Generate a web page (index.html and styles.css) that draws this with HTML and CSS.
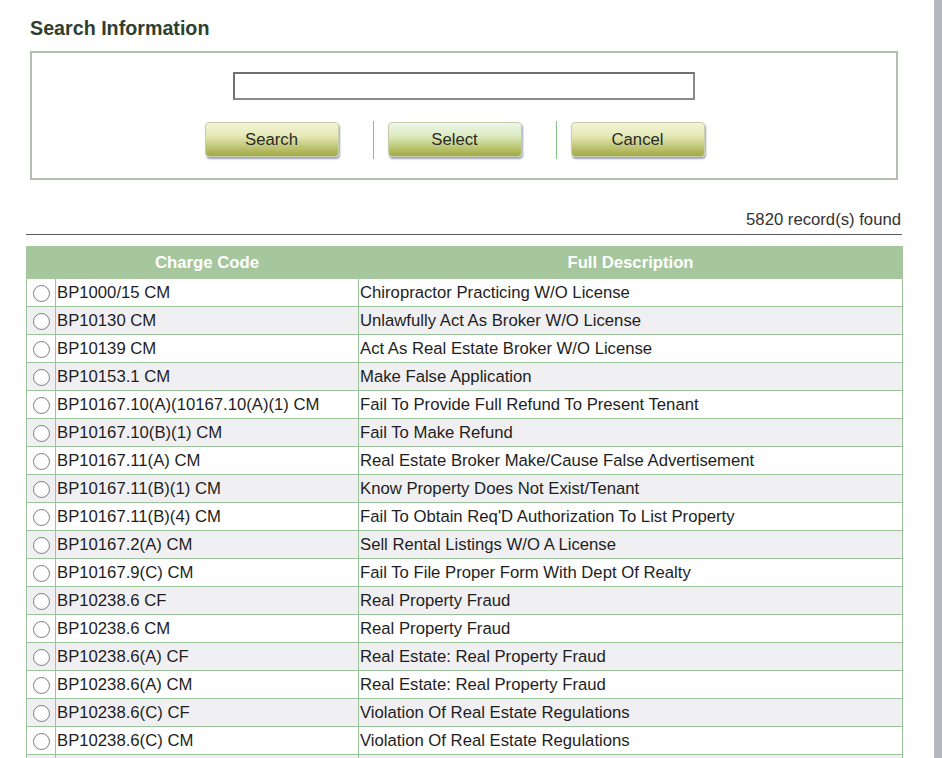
FILE: index.html
```html
<!DOCTYPE html>
<html lang="en">
<head>
<meta charset="utf-8">
<title>Search Information</title>
<link rel="stylesheet" href="styles.css">
</head>
<body>
<div class="page">
  <main class="content">
    <h1 class="title">Search Information</h1>
    <section class="search-box">
      <input class="search-input" type="text">
      <div class="actions">
        <button class="btn" type="button">Search</button>
        <span class="sep"></span>
        <button class="btn btn-hover" type="button">Select</button>
        <span class="sep"></span>
        <button class="btn" type="button">Cancel</button>
      </div>
    </section>
    <section class="results">
      <div class="count">5820 record(s) found</div>
      <table class="grid">
        <colgroup>
          <col class="c-radio">
          <col class="c-code">
          <col class="c-desc">
        </colgroup>
        <thead>
          <tr><th></th><th>Charge Code</th><th>Full Description</th></tr>
        </thead>
        <tbody>
          <tr><td><span class="radio"></span></td><td>BP1000/15 CM</td><td>Chiropractor Practicing W/O License</td></tr>
          <tr><td><span class="radio"></span></td><td>BP10130 CM</td><td>Unlawfully Act As Broker W/O License</td></tr>
          <tr><td><span class="radio"></span></td><td>BP10139 CM</td><td>Act As Real Estate Broker W/O License</td></tr>
          <tr><td><span class="radio"></span></td><td>BP10153.1 CM</td><td>Make False Application</td></tr>
          <tr><td><span class="radio"></span></td><td>BP10167.10(A)(10167.10(A)(1) CM</td><td>Fail To Provide Full Refund To Present Tenant</td></tr>
          <tr><td><span class="radio"></span></td><td>BP10167.10(B)(1) CM</td><td>Fail To Make Refund</td></tr>
          <tr><td><span class="radio"></span></td><td>BP10167.11(A) CM</td><td>Real Estate Broker Make/Cause False Advertisement</td></tr>
          <tr><td><span class="radio"></span></td><td>BP10167.11(B)(1) CM</td><td>Know Property Does Not Exist/Tenant</td></tr>
          <tr><td><span class="radio"></span></td><td>BP10167.11(B)(4) CM</td><td>Fail To Obtain Req'D Authorization To List Property</td></tr>
          <tr><td><span class="radio"></span></td><td>BP10167.2(A) CM</td><td>Sell Rental Listings W/O A License</td></tr>
          <tr><td><span class="radio"></span></td><td>BP10167.9(C) CM</td><td>Fail To File Proper Form With Dept Of Realty</td></tr>
          <tr><td><span class="radio"></span></td><td>BP10238.6 CF</td><td>Real Property Fraud</td></tr>
          <tr><td><span class="radio"></span></td><td>BP10238.6 CM</td><td>Real Property Fraud</td></tr>
          <tr><td><span class="radio"></span></td><td>BP10238.6(A) CF</td><td>Real Estate: Real Property Fraud</td></tr>
          <tr><td><span class="radio"></span></td><td>BP10238.6(A) CM</td><td>Real Estate: Real Property Fraud</td></tr>
          <tr><td><span class="radio"></span></td><td>BP10238.6(C) CF</td><td>Violation Of Real Estate Regulations</td></tr>
          <tr><td><span class="radio"></span></td><td>BP10238.6(C) CM</td><td>Violation Of Real Estate Regulations</td></tr>
          <tr><td></td><td></td><td></td></tr>
        </tbody>
      </table>
    </section>
  </main>
  <div class="strip"></div>
</div>
</body>
</html>
```
FILE: styles.css
```css
* { box-sizing: border-box; }

html, body {
  margin: 0;
  padding: 0;
  background: #ffffff;
  font-family: "Liberation Sans", Arial, sans-serif;
  color: #222;
}

.page {
  display: flex;
  min-height: 100vh;
}

.content {
  width: 934px;
  flex: none;
}

.strip {
  width: 8px;
  flex: none;
  background: #b6b6be;
}

.title {
  margin: 16px 0 0 30px;
  font-size: 19.7px;
  line-height: 24px;
  font-weight: bold;
  color: #2e402f;
}

.search-box {
  margin: 11px 0 0 30px;
  width: 868px;
  height: 129px;
  border: 2px solid #b2beb0;
  padding-top: 19px;
  display: flex;
  flex-direction: column;
  align-items: center;
}

.search-input {
  width: 462px;
  height: 28px;
  border: 2px solid #707070;
  border-right-color: #8a8a8a;
  border-bottom-color: #8a8a8a;
  background: #fff;
  margin: 0;
  padding: 0 4px;
  font: 16px "Liberation Sans", Arial, sans-serif;
}

.actions {
  margin-top: 22px;
  display: flex;
  align-items: flex-start;
  padding-right: 17px;
}

.btn {
  width: 134px;
  height: 35px;
  margin: 0 2px 2px 0;
  border: 1px solid #c9ccaa;
  border-radius: 4px;
  background: linear-gradient(#f4f4da 0%, #e4e8b4 40%, #c0c676 72%, #a2aa44 100%);
  box-shadow: 1px 2px 2px #9ea4bc;
  font: 16.7px "Liberation Sans", Arial, sans-serif;
  color: #2a2a2a;
  padding: 0;
}

.btn-hover {
  background: linear-gradient(#ecf6ea 0%, #dceac0 40%, #bec876 72%, #a0aa46 100%);
}

.sep {
  width: 1px;
  height: 38px;
  margin: -1px 14px 0 32px;
  background: #88bc88;
}

.results {
  margin: 29px 0 0 26px;
  width: 876px;
}

.count {
  text-align: right;
  font-size: 16.7px;
  line-height: 18px;
  color: #333;
  padding-top: 2px;
  padding-right: 1px;
  padding-bottom: 5px;
  border-bottom: 1px solid #5a5a5a;
}

.grid {
  margin-top: 11px;
  width: 876px;
  table-layout: fixed;
  border-collapse: collapse;
  font-size: 16.7px;
}

.c-radio { width: 29px; }
.c-code { width: 303px; }
.c-desc { width: 544px; }

.grid thead tr {
  height: 32px;
  background: #a6c69e;
}

.grid th {
  border: 1px solid #a6c69e;
  color: #fff;
  font-weight: bold;
  text-align: center;
  padding: 0;
}

.grid tbody tr { height: 28px; }

.grid tbody tr:nth-child(even) { background: #f0eff2; }

.grid td {
  border: 1px solid #9cc49c;
  padding: 0 0 0 1px;
  white-space: nowrap;
  color: #1e1e1e;
  vertical-align: middle;
}

.grid td:first-child {
  padding: 0;
  text-align: center;
}

.radio {
  display: inline-block;
  width: 17px;
  height: 17px;
  border: 1px solid #7a7a7a;
  border-radius: 50%;
  background: #fff;
  vertical-align: middle;
  margin-left: 1px;
}
```
